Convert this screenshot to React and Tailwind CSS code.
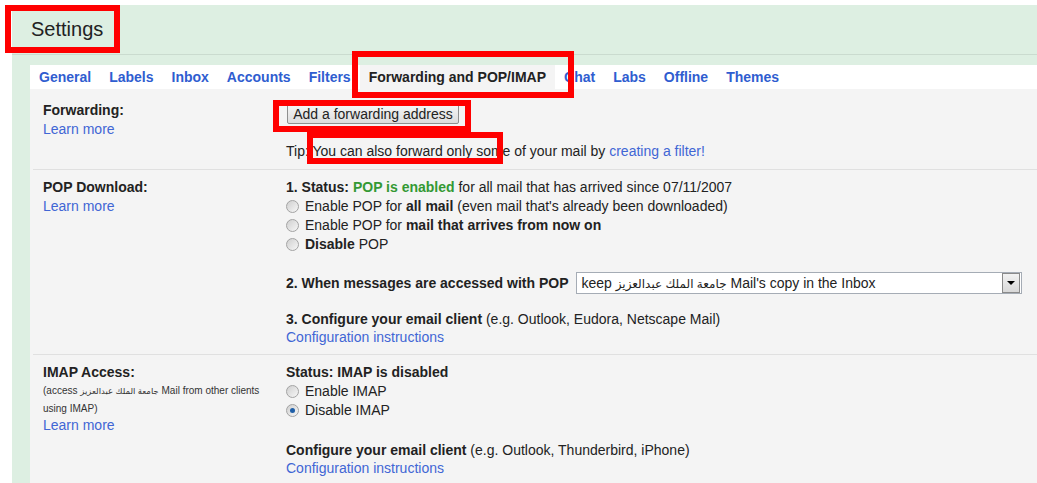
import React from 'react';

const tabs = ['General', 'Labels', 'Inbox', 'Accounts', 'Filters', 'Forwarding and POP/IMAP', 'Chat', 'Labs', 'Offline', 'Themes'];
const activeTab = 'Forwarding and POP/IMAP';

// old-style grey radio button
const Radio = ({ checked }) => (
  <span className="inline-flex items-center justify-center w-[13px] h-[13px] mr-[6px] rounded-full border border-[#a3a3a3] bg-linear-to-br from-[#cfcfcf] to-[#f7f7f7] shrink-0">
    {checked && <span className="w-[5px] h-[5px] rounded-full bg-[#1f5fa8]" />}
  </span>
);

const Link = ({ children }) => <span className="text-[#4166d5] cursor-pointer">{children}</span>;

// red highlight frames drawn over the page
const Mark = ({ className }) => <div className={`absolute border-[6px] border-[#ff0000] pointer-events-none ${className}`} />;

const App = () => {
  return (
    <div className="relative w-[1037px] h-[483px] overflow-hidden bg-white text-[#222] text-[14px] font-['Liberation_Sans','DejaVu_Sans',Arial,sans-serif]">
      <div className="mt-[5px] ml-[12px] h-[478px] bg-[#ddefe2] flex flex-col">
        {/* page title */}
        <div className="h-[50px] border-b border-[#cadbcf] pl-[19px] pt-[11px] text-[20px] leading-[26px]">Settings</div>

        <div className="flex flex-1 pt-[10px]">
          <div className="w-[18px] shrink-0" />
          <div className="flex-1 flex flex-col">
            {/* tab bar */}
            <div className="h-[24px] bg-white flex items-stretch">
              {tabs.map((t) => (
                <div
                  key={t}
                  className={`px-[9px] flex items-center font-bold ${t === activeTab ? 'bg-[#f4f4f4] text-[#222]' : 'text-[#2f5dd0]'}`}
                >
                  {t}
                </div>
              ))}
            </div>

            {/* settings rows */}
            <div className="flex-1 bg-[#f4f4f4] leading-[19px]">
              {/* Forwarding */}
              <div className="ml-[3px] grid grid-cols-[253px_1fr] border-b border-[#e0e0e0] pt-[12px] pb-[8px]">
                <div className="pl-[10px]">
                  <div className="font-bold">Forwarding:</div>
                  <Link>Learn more</Link>
                </div>
                <div>
                  <button className="mt-[3px] ml-[1px] h-[20px] w-[172px] rounded-[2px] border border-[#8f8f8f] bg-linear-to-b from-[#f6f6f6] to-[#dcdcdc] text-[14px] leading-[18px] text-[#222]">
                    Add a forwarding address
                  </button>
                  <div className="mt-[18px]">
                    Tip: You can also forward only some of your mail by <Link>creating a filter!</Link>
                  </div>
                </div>
              </div>

              {/* POP Download */}
              <div className="ml-[3px] grid grid-cols-[253px_1fr] border-b border-[#e0e0e0] pt-[8px] pb-[8px]">
                <div className="pl-[10px]">
                  <div className="font-bold">POP Download:</div>
                  <Link>Learn more</Link>
                </div>
                <div>
                  <div>
                    <b>1. Status: </b>
                    <b className="text-[#339933]">POP is enabled</b> for all mail that has arrived since 07/11/2007
                  </div>
                  <div className="flex items-center">
                    <Radio />
                    <span>
                      Enable POP for <b>all mail</b> (even mail that's already been downloaded)
                    </span>
                  </div>
                  <div className="flex items-center">
                    <Radio />
                    <span>
                      Enable POP for <b>mail that arrives from now on</b>
                    </span>
                  </div>
                  <div className="flex items-center">
                    <Radio />
                    <span>
                      <b>Disable</b> POP
                    </span>
                  </div>

                  <div className="mt-[18px] h-[22px] flex items-center">
                    <b>2. When messages are accessed with POP</b>
                    <div className="ml-[8px] w-[446px] h-[22px] flex items-center border border-[#a5acb5] bg-white">
                      <span className="flex-1 pl-[4px] leading-[20px]">
                        keep <span className="text-[12px] leading-none">جامعة الملك عبدالعزيز</span> Mail's copy in the Inbox
                      </span>
                      <span className="w-[18px] h-[20px] mr-[1px] flex items-center justify-center border border-[#8a8a8a] bg-linear-to-b from-[#f2f2f2] to-[#d8d8d8]">
                        <span className="w-0 h-0 border-x-[4px] border-x-transparent border-t-[4px] border-t-black" />
                      </span>
                    </div>
                  </div>

                  <div className="mt-[16px]">
                    <b>3. Configure your email client</b> (e.g. Outlook, Eudora, Netscape Mail)
                  </div>
                  <div className="leading-[17px]">
                    <Link>Configuration instructions</Link>
                  </div>
                </div>
              </div>

              {/* IMAP Access */}
              <div className="ml-[3px] grid grid-cols-[253px_1fr] pt-[8px]">
                <div className="pl-[10px]">
                  <div className="font-bold">IMAP Access:</div>
                  <div className="text-[10px] leading-[18px] text-[#333]">
                    (access <span className="text-[8.5px]">جامعة الملك عبدالعزيز</span> Mail from other clients
                    <br />
                    using IMAP)
                  </div>
                  <div className="leading-[15px]">
                    <Link>Learn more</Link>
                  </div>
                </div>
                <div>
                  <div className="font-bold">Status: IMAP is disabled</div>
                  <div className="flex items-center">
                    <Radio />
                    <span>Enable IMAP</span>
                  </div>
                  <div className="flex items-center">
                    <Radio checked />
                    <span>Disable IMAP</span>
                  </div>
                  <div className="mt-[21px]">
                    <b>Configure your email client</b> (e.g. Outlook, Thunderbird, iPhone)
                  </div>
                  <div className="leading-[17px]">
                    <Link>Configuration instructions</Link>
                  </div>
                </div>
              </div>
            </div>
          </div>
        </div>
      </div>

      <Mark className="left-[5px] top-[5px] w-[115px] h-[48px]" />
      <Mark className="left-[352px] top-[51px] w-[222px] h-[47px]" />
      <Mark className="left-[273px] top-[100px] w-[198px] h-[32px]" />
      <Mark className="left-[307px] top-[132px] w-[196px] h-[32px]" />
    </div>
  );
};

export default App;
